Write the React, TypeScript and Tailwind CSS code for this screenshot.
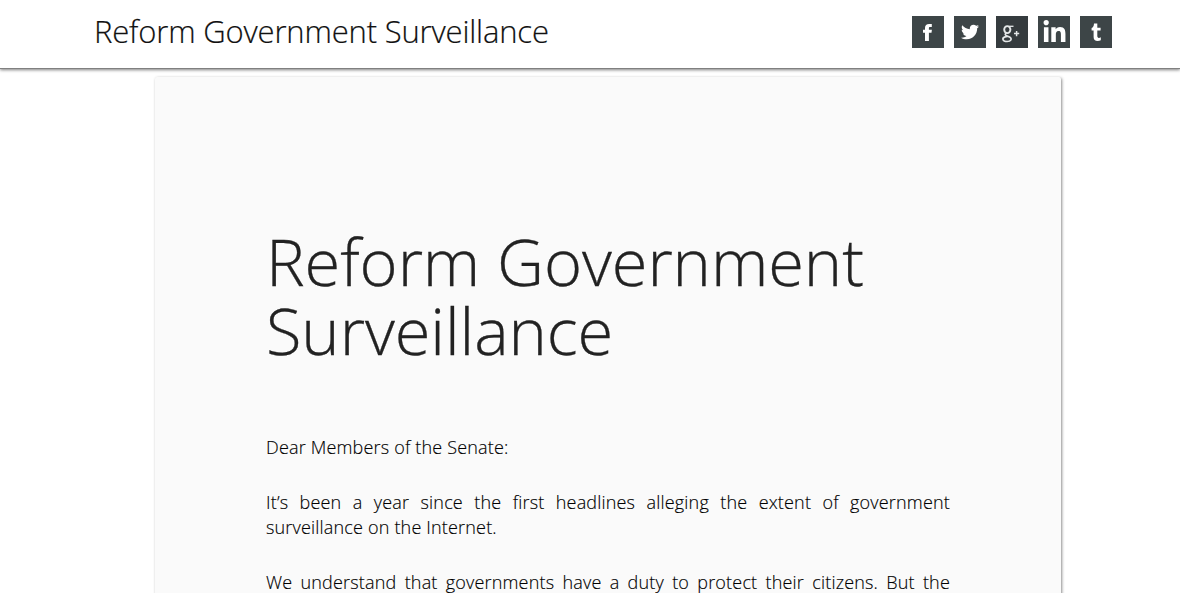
import { FaTwitter, FaLinkedinIn } from 'react-icons/fa';

function FacebookIcon() {
  return (
    <svg viewBox="0 0 32 32" className="size-8" fill="currentColor">
      <path d="M13 25v-8.300h-2v-3h2v-1.600c0-2.800 1.500-4.100 4.100-4.100h2.700v3.100h-1.600c-1 0-1.300.4-1.300 1.300v1.300h3l-.4 3h-2.600V25z" />
    </svg>
  );
}

function GooglePlusIcon() {
  return (
    <svg viewBox="0 0 32 32" className="size-8" fill="none" stroke="#e4e7e8">
      <ellipse cx="11.300" cy="13.600" rx="3.100" ry="3.500" strokeWidth="1.900" />
      <path d="M13.200 10.300h4.300" strokeWidth="1.300" />
      <path d="M10.500 17c-1.700 1-1.600 2 0 2.700l3 1.300c3 1.500 1.600 4.500-2.400 4.500-4.600 0-5.500-3.300-2.100-4.600 1-.4 2.200-.5 3.200-.4" strokeWidth="1.700" />
      <path d="M18 17.600h5.200M20.600 15v5.200" strokeWidth="1.500" />
    </svg>
  );
}

function TumblrIcon() {
  return (
    <svg viewBox="0 0 32 32" className="size-8" fill="currentColor">
      <path d="M14 7.500h3.300v4.200h3.300v2.900h-3.300v5.200c0 1.500.5 2.100 1.600 2.100.6 0 1.200-.2 1.900-.6v3c-1 .5-2 .7-3.200.7-2.600 0-4-1.400-4-4v-6.400h-2v-2.500c1.500-.6 2.300-2 2.400-4.600z" />
    </svg>
  );
}

const SOCIAL_LINKS = [
  { label: 'Facebook', icon: <FacebookIcon />, tile: 'bg-[#3d4547]' },
  { label: 'Twitter', icon: <FaTwitter className="w-[18px] h-[18px]" />, tile: 'bg-[#3d4547]' },
  { label: 'Google Plus', icon: <GooglePlusIcon />, tile: 'bg-[#353b3e]' },
  { label: 'LinkedIn', icon: <FaLinkedinIn className="w-[25px] h-[25px] mt-px" />, tile: 'bg-[#3d4547]' },
  { label: 'Tumblr', icon: <TumblrIcon />, tile: 'bg-[#3d4547]' },
];

const PARAGRAPHS = [
  'Dear Members of the Senate:',
  'It’s been a year since the first headlines alleging the extent of government surveillance on the Internet.',
  'We understand that governments have a duty to protect their citizens. But the balance in many countries has tipped too far in favor of the state.',
];

export default function App() {
  return (
    <div className="h-[593px] overflow-hidden bg-white font-['Open_Sans',sans-serif] text-[#222]">
      <header className="h-[69px] pl-[94px] pr-[68px] flex justify-between items-start border-b border-[#808080] shadow-[0_1px_3px_rgba(0,0,0,0.5)]">
        <span className="mt-[9px] text-[31px] leading-[44px] font-light tracking-[-0.17px] text-[#111] [-webkit-text-stroke:0.2px]">Reform Government Surveillance</span>
        <nav className="mt-4 flex gap-2.5">
          {SOCIAL_LINKS.map((link) => (
            <a key={link.label} aria-label={link.label} className={`size-8 text-white flex items-center justify-center ${link.tile}`}>
              {link.icon}
            </a>
          ))}
        </nav>
      </header>

      <main className="mt-2 ml-[155px] w-[906px] h-[700px] px-[111px] pt-[150px] rounded-[2px] bg-[#fafafa] shadow-[1px_1px_3px_rgba(0,0,0,0.45)]">
        <h1 className="text-[65px] leading-[69px] font-light tracking-[-0.08px] [-webkit-text-stroke:0.3px]">
          Reform Government
          <br />
          Surveillance
        </h1>
        <div className="mt-[70px] text-[18px] leading-[25px] font-light tracking-[0.18px] text-justify text-black [-webkit-text-stroke:0.15px]">
          {PARAGRAPHS.map((text) => (
            <p key={text} className="mb-[30px]">{text}</p>
          ))}
        </div>
      </main>
    </div>
  );
}
